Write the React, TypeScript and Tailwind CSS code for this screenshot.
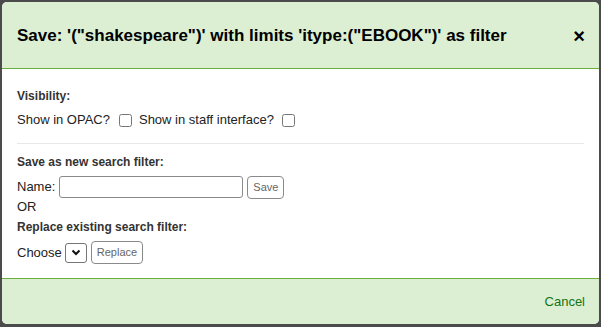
import React from 'react';

const font = { fontFamily: '"Liberation Sans", Arial, sans-serif' };

const SmallButton: React.FC<{ label: string; className?: string }> = ({ label, className = '' }) => (
  <button className={`h-[23px] px-[5px] border border-[#8a8a8a] rounded-[4px] bg-white text-[11px] text-[#666] leading-none ${className}`}>
    {label}
  </button>
);

export default function App() {
  return (
    <div className="w-[601px] h-[327px] bg-[#4b4b4b] p-[2px] pb-[3px]" style={font}>
      <div className="w-[597px] h-[322px] bg-white rounded-[5px] overflow-hidden flex flex-col text-[#222]">
        <div className="h-[67px] shrink-0 bg-[#dcefd3] border-b border-[#6aae3e] flex items-center justify-between pl-[15px] pr-[14px] pt-[1px]">
          <h2 className="text-[17px] font-bold text-black">
            Save: '("shakespeare")' with limits 'itype:("EBOOK")' as filter
          </h2>
          <button className="text-[20px] font-bold text-black leading-none">×</button>
        </div>

        <div className="flex-1 px-[15px] pt-[19px]">
          <div className="h-[17px] leading-[17px] text-[12px] font-bold text-[#333]">Visibility:</div>
          <div className="mt-[5px] h-[20px] flex items-center text-[13px] text-[#222]">
            <span>Show in OPAC?</span>
            <input type="checkbox" className="ml-[9px] mr-[7px] w-[13px] h-[13px]" />
            <span>Show in staff interface?</span>
            <input type="checkbox" className="ml-[8px] w-[13px] h-[13px]" />
          </div>
          <hr className="mt-[13px] border-t border-[#e8e8e8]" />
          <div className="mt-[10px] h-[17px] leading-[17px] text-[12px] font-bold text-[#333]">Save as new search filter:</div>
          <div className="mt-[4px] h-[24px] flex items-center gap-[4px] text-[13px]">
            <span>Name:</span>
            <input type="text" className="w-[184px] h-[22px] border border-[#8a8a8a] rounded-[3px] px-1" />
            <SmallButton label="Save" />
          </div>
          <div className="h-[16px] leading-[16px] text-[13px]">OR</div>
          <div className="mt-[4px] h-[17px] leading-[17px] text-[12px] font-bold text-[#333]">Replace existing search filter:</div>
          <div className="mt-[4px] h-[25px] flex items-center gap-[3px] text-[13px]">
            <span>Choose</span>
            <span className="w-[22px] h-[20px] border border-[#767676] rounded-[3px] flex items-center justify-center">
              <svg width="10" height="7" viewBox="0 0 10 7">
                <path d="M1.5 1.5 L5 5 L8.5 1.5" fill="none" stroke="#111" strokeWidth="2" />
              </svg>
            </span>
            <SmallButton label="Replace" className="ml-[1px]" />
          </div>
        </div>

        <div className="h-[46px] shrink-0 bg-[#dcefd3] border-t border-[#6aae3e] flex items-center justify-end pr-[14px]">
          <a className="text-[13px] text-[#137313]">Cancel</a>
        </div>
      </div>
    </div>
  );
}
